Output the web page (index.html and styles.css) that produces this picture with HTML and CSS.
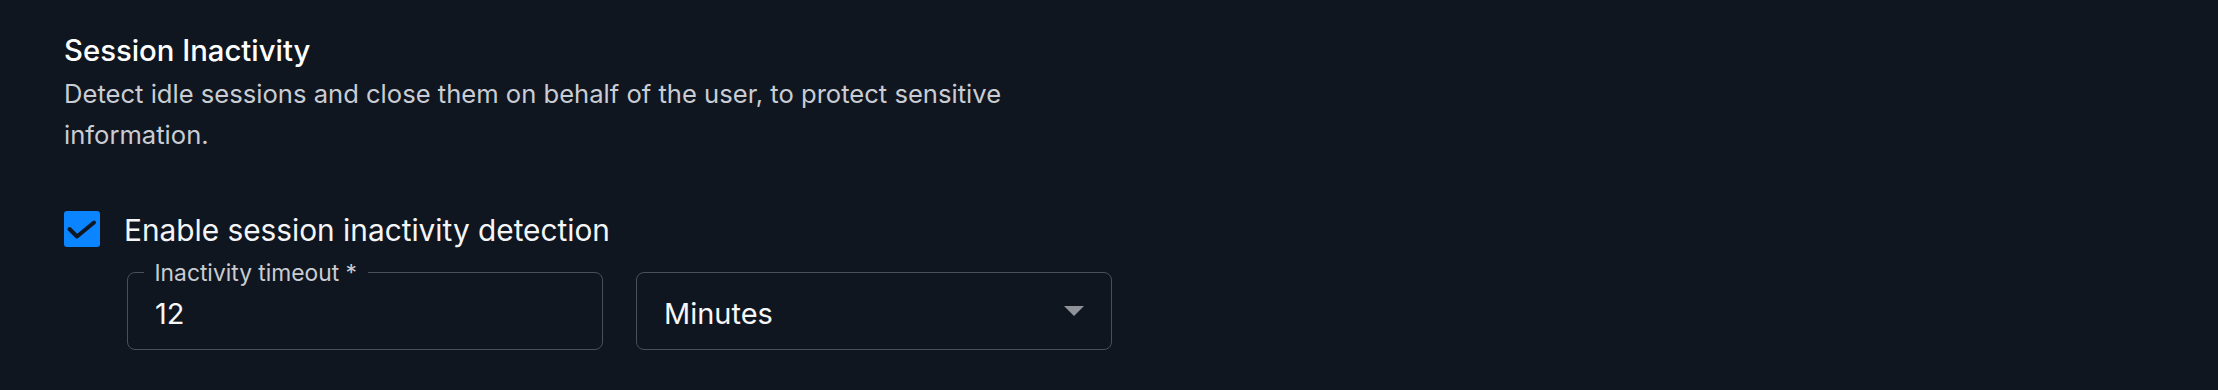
FILE: index.html
```html
<!DOCTYPE html>
<html lang="en">
<head>
<meta charset="utf-8">
<title>Session Inactivity</title>
<link rel="stylesheet" href="styles.css">
</head>
<body>
<section class="section">
  <h2 class="title">Session Inactivity</h2>
  <p class="desc">Detect idle sessions and close them on behalf of the user, to protect sensitive information.</p>
  <label class="check-row">
    <span class="checkbox">
      <svg viewBox="0 0 36 36" width="36" height="36" aria-hidden="true">
        <polyline points="5.5,18 13,25.5 30,11.5" fill="none" stroke="#0f1722" stroke-width="4" stroke-linecap="round" stroke-linejoin="round"/>
      </svg>
    </span>
    <span class="check-label">Enable session inactivity detection</span>
  </label>
  <div class="fields">
    <div class="field">
      <span class="field-label">Inactivity timeout *</span>
      <span class="field-value">12</span>
    </div>
    <div class="field select">
      <span class="field-value">Minutes</span>
      <span class="arrow"></span>
    </div>
  </div>
</section>
</body>
</html>
```
FILE: styles.css
```css
html, body {
  margin: 0;
  padding: 0;
  background: #101620;
}
body {
  font-family: Inter, "Noto Sans", sans-serif;
  color: #f4f5f7;
}
.section {
  padding: 30px 0 0 64px;
}
.title {
  margin: 0;
  font-size: 29.3px;
  line-height: 41px;
  font-weight: 500;
  color: #ffffff;
}
.desc {
  margin: 1.5px 0 0;
  max-width: 1010px;
  font-size: 25.6px;
  line-height: 41.5px;
  color: #c9cdd3;
}
.check-row {
  display: flex;
  align-items: center;
  margin-top: 55.5px;
  height: 36px;
}
.checkbox {
  width: 36px;
  height: 36px;
  border-radius: 3px;
  background: #0a84ff;
  display: flex;
  flex: none;
  margin-right: 24px;
}
.check-label {
  font-size: 29.8px;
  line-height: 36px;
  padding-top: 2.5px;
  color: #f4f5f7;
}
.fields {
  display: flex;
  gap: 33px;
  margin-top: 25px;
  padding-left: 63px;
}
.field {
  position: relative;
  box-sizing: border-box;
  width: 476px;
  height: 78px;
  border: 1.5px solid #4a4f58;
  border-radius: 8px;
  display: flex;
  align-items: center;
  padding: 5px 27px 0 27px;
}
.field-label {
  position: absolute;
  top: -12.3px;
  left: 15.5px;
  padding: 0 11px;
  background: #101620;
  font-size: 22.8px;
  line-height: 24px;
  color: #c9ccd1;
}
.field-value {
  font-size: 29px;
  color: #f6f7f8;
}
.select {
  justify-content: space-between;
}
.arrow {
  width: 0;
  height: 0;
  border-left: 10px solid transparent;
  border-right: 10px solid transparent;
  border-top: 10px solid #8f9299;
  margin-top: -5px;
}
```
